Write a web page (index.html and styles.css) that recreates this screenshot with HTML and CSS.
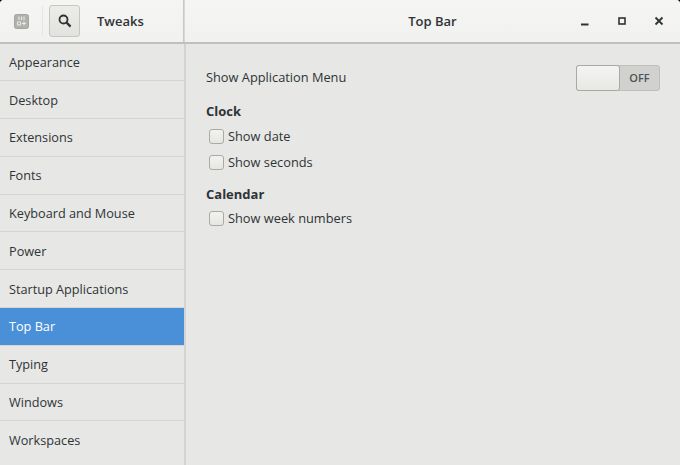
FILE: index.html
```html
<!DOCTYPE html>
<html lang="en">
<head>
<meta charset="utf-8">
<title>Tweaks</title>
<link rel="stylesheet" href="styles.css">
</head>
<body>
<div class="window">
  <header class="titlebar">
    <div class="title-left">
      <svg class="app-icon" width="15" height="15" viewBox="0 0 15 15">
        <rect x="0.5" y="0.5" width="14" height="14" rx="2" fill="#b0b0ac" stroke="#a4a4a0"/>
        <path d="M5 2.5v3.5M7.5 2.5v3.5M10 2.5v3.5" stroke="#ecece8" stroke-width="1.1"/>
        <circle cx="5" cy="9.5" r="1.7" fill="none" stroke="#ecece8" stroke-width="1.1"/>
        <path d="M8 9.5h4M10 7.5v4" stroke="#ecece8" stroke-width="1.1"/>
      </svg>
      <div class="sep"></div>
      <button class="search-btn" aria-label="Search">
        <svg width="16" height="16" viewBox="0 0 16 16">
          <circle cx="6.5" cy="6.5" r="4" fill="none" stroke="#2e3436" stroke-width="1.8"/>
          <path d="M9.6 9.6l4 4" stroke="#2e3436" stroke-width="2.2"/>
        </svg>
      </button>
      <span class="app-title">Tweaks</span>
    </div>
    <div class="title-right">
      <span class="page-title">Top Bar</span>
      <div class="win-controls">
        <svg width="10" height="10" viewBox="0 0 10 10"><path d="M1 8.5h7.5" stroke="#2e3436" stroke-width="2"/></svg>
        <svg width="10" height="10" viewBox="0 0 10 10"><rect x="2" y="2" width="6" height="6" fill="none" stroke="#2e3436" stroke-width="1.6"/></svg>
        <svg width="10" height="10" viewBox="0 0 10 10"><path d="M1.5 1.5l7 7M8.5 1.5l-7 7" stroke="#2e3436" stroke-width="1.8"/></svg>
      </div>
    </div>
  </header>
  <div class="body">
    <nav class="sidebar">
      <div class="row">Appearance</div>
      <div class="row">Desktop</div>
      <div class="row">Extensions</div>
      <div class="row">Fonts</div>
      <div class="row">Keyboard and Mouse</div>
      <div class="row">Power</div>
      <div class="row">Startup Applications</div>
      <div class="row selected">Top Bar</div>
      <div class="row">Typing</div>
      <div class="row">Windows</div>
      <div class="row">Workspaces</div>
    </nav>
    <main class="content">
      <div class="switch-row">
        <span class="switch-label">Show Application Menu</span>
        <div class="switch">
          <div class="knob"></div>
          <span class="off">OFF</span>
        </div>
      </div>
      <h2 class="heading clock">Clock</h2>
      <label class="check first"><span class="box"></span>Show date</label>
      <label class="check"><span class="box"></span>Show seconds</label>
      <h2 class="heading calendar">Calendar</h2>
      <label class="check first"><span class="box"></span>Show week numbers</label>
    </main>
  </div>
</div>
</body>
</html>
```
FILE: styles.css
```css
html, body {
  margin: 0;
  height: 100%;
  background: #000;
}
body {
  font-family: "Open Sans", "Noto Sans", sans-serif;
  font-size: 13px;
  color: #2e3436;
  overflow: hidden;
}
.window {
  width: 680px;
  height: 465px;
  display: flex;
  flex-direction: column;
  background: #e7e7e5;
  border-radius: 4px 4px 0 0;
  overflow: hidden;
}
.titlebar {
  height: 42px;
  flex: none;
  display: flex;
  background: linear-gradient(#f5f5f4, #f1f1f0);
  border-bottom: 2px solid #c0c0be;
}
.title-left {
  width: 184px;
  flex: none;
  display: flex;
  align-items: center;
  padding-left: 14px;
  box-sizing: border-box;
  border-right: 1px solid #c8c8c6;
}
.sep {
  width: 1px;
  height: 30px;
  margin: 0 6px 0 13px;
  background: #e6e6e4;
}
.search-btn {
  width: 31px;
  height: 32px;
  padding: 0;
  display: flex;
  align-items: center;
  justify-content: center;
  border: 1px solid #c6c6c3;
  border-radius: 3px;
  background: linear-gradient(#ecece9, #e2e2df);
}
.app-title {
  margin-left: 17px;
  font-weight: 600;
  font-size: 13px;
}
.title-right {
  flex: 1;
  display: flex;
  align-items: center;
  justify-content: center;
  position: relative;
  border-left: 1px solid #d8d8d6;
}
.page-title {
  font-weight: 600;
}
.win-controls {
  position: absolute;
  right: 16px;
  top: 16px;
  display: flex;
  gap: 27px;
}
.body {
  flex: 1;
  display: flex;
  min-height: 0;
}
.sidebar {
  width: 186px;
  flex: none;
  box-sizing: border-box;
  border-right: 2px solid #d3d3d1;
}
.row {
  height: 37.8px;
  box-sizing: border-box;
  display: flex;
  align-items: center;
  padding: 0 0 0 9px;
  border-bottom: 1px solid #d5d5d3;
  font-size: 12.7px;
}
.row:first-child {
  margin-top: -0.6px;
}
.row:last-child {
  border-bottom: none;
}
.selected {
  background: #4a90d9;
  color: #fff;
}
.content {
  flex: 1;
  padding: 21px 20px 0 20px;
}
.switch-row {
  display: flex;
  justify-content: space-between;
  align-items: center;
  height: 26px;
}
.switch-label {
  font-size: 12.8px;
  position: relative;
  top: -1px;
}
.switch {
  width: 84px;
  height: 26px;
  box-sizing: border-box;
  display: flex;
  background: #d1d1cf;
  border: 1px solid #bebebb;
  border-radius: 3px;
}
.knob {
  width: 42px;
  background: linear-gradient(#f4f4f2, #e8e8e5);
  border: 1px solid #a9a9a6;
  border-radius: 3px;
  margin: -1px 0 -1px -1px;
}
.off {
  flex: 1;
  text-align: center;
  line-height: 24px;
  font-size: 11px;
  font-weight: 600;
  color: #4d5356;
}
.heading {
  margin: 0;
  font-size: 13px;
  font-weight: 700;
  line-height: 18px;
}
.clock { margin-top: 11px; }
.calendar { margin-top: 14px; }
.check {
  display: flex;
  align-items: center;
  height: 18px;
  margin-top: 8px;
  margin-left: 3px;
  font-size: 12.8px;
}
.check.first { margin-top: 7px; }
.calendar + .check.first { margin-top: 6px; }
.box {
  width: 13px;
  height: 13px;
  margin-right: 4px;
  background: linear-gradient(#f2f2f0, #e6e6e3);
  border: 1px solid #a9a9a6;
  border-radius: 3px;
}
```
